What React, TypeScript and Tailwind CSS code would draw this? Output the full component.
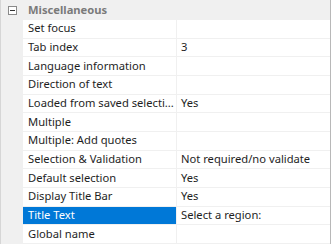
import React from "react";

const rows: { label: string; value?: string; selected?: boolean }[] = [
  { label: "Set focus" },
  { label: "Tab index", value: "3" },
  { label: "Language information" },
  { label: "Direction of text" },
  { label: "Loaded from saved selecti...", value: "Yes" },
  { label: "Multiple" },
  { label: "Multiple: Add quotes" },
  { label: "Selection & Validation", value: "Not required/no validate" },
  { label: "Default selection", value: "Yes" },
  { label: "Display Title Bar", value: "Yes" },
  { label: "Title Text", value: "Select a region:", selected: true },
  { label: "Global name" },
];

export default function App() {
  return (
    <div
      className="w-[333px] h-[244px] overflow-hidden bg-white flex text-[11.2px] text-[#1e1e1e]"
      style={{ fontFamily: '"Noto Sans", "Open Sans", sans-serif' }}
    >
      <div className="w-[331px] flex flex-col border-l border-[#d6d6d6] border-r border-r-[#b8b8b8]">
        {/* category header */}
        <div className="h-[20px] flex items-center bg-[#f0f0f0] shrink-0">
          <div className="w-[22px] flex justify-center">
            <div className="w-[9px] h-[9px] border border-[#8a8a8a] bg-white flex items-center justify-center">
              <div className="w-[5px] h-px bg-[#333]" />
            </div>
          </div>
          <span className="font-bold text-[#7a7a7a] pl-[5px]">Miscellaneous</span>
        </div>
        <div className="flex flex-1">
          <div className="w-[22px] bg-[#f0f0f0] shrink-0" />
          <div className="flex-1 flex flex-col">
            {rows.map((r, i) => (
              <div key={i} className="h-[18.67px] flex border-b border-[#f0f0f0] shrink-0">
                <div
                  className={
                    "w-[154px] pl-[5px] flex items-center whitespace-nowrap overflow-hidden border-r border-[#f0f0f0] " +
                    (r.selected ? "bg-[#0078d7] text-white" : "")
                  }
                >
                  {r.label}
                </div>
                <div className="flex-1 pl-[4px] flex items-center whitespace-nowrap overflow-hidden">
                  {r.value}
                </div>
              </div>
            ))}
          </div>
        </div>
      </div>
    </div>
  );
}
